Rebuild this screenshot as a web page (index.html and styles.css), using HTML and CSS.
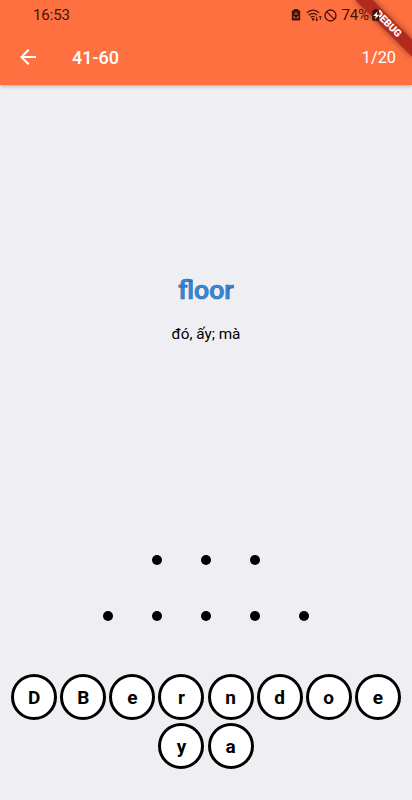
FILE: index.html
```html
<!DOCTYPE html>
<html lang="vi">
<head>
  <meta charset="UTF-8" />
  <title>41-60</title>
  <meta name="viewport" content="width=device-width, initial-scale=1.0" />
  <link rel="stylesheet" href="styles.css">
</head>
<body>
  <header>
    <div class="status-bar">
      <span class="time">16:53</span>
      <div class="status-icons">
        <svg class="saver" width="10" height="12" viewBox="0 0 10 12">
          <path d="M3 0h4v1.3h1.200q1 0 1 1v8.200q0 1-1 1H1.800q-1 0-1-1V2.300q0-1 1-1H3z" fill="#431307"/>
          <path d="M3.500 5.700L5 3.700 6.500 5.700M3 7.100v1.700h1.500M7 7.100v1.700H5.500" fill="none" stroke="#ff7040" stroke-width=".9"/>
        </svg>
        <svg class="wifi" width="17" height="13" viewBox="0 0 17 13">
          <g fill="none" stroke="#431307" stroke-width="1.200">
            <path d="M.7 3.900Q7 -1.700 13.300 3.900M2.700 6.300Q7 2.500 11.300 6.100M4.700 8.500Q7 6.700 8.600 8"/>
            <path d="M10.700 7.800v4M9.400 10.500l1.300 1.300 1.300-1.300M14.300 11V7M13 8.300L14.300 7l1.300 1.300" stroke-width="1"/>
          </g>
          <circle cx="7" cy="10.200" r="1.200" fill="#431307"/>
        </svg>
        <svg class="block" width="13" height="13" viewBox="0 0 13 13">
          <circle cx="6.500" cy="6.500" r="5.500" fill="none" stroke="#431307" stroke-width="1.300"/>
          <path d="M2.600 2.600l7.800 7.800" stroke="#431307" stroke-width="1.300"/>
        </svg>
        <span class="percent">74%</span>
        <svg class="battery" width="9" height="12" viewBox="0 0 9 12">
          <path d="M2 0h3.500v1.200H7v10.600H1.200Q.2 11.800.2 10.800V2.200q0-1 1-1H2z" fill="#431307"/>
          <path d="M5.400 2.600L1.200 7h2.600L3 10.200 7.400 5.800H4.700z" fill="#fff"/>
        </svg>
      </div>
    </div>
    <div class="app-bar">
      <svg class="back" width="24" height="24" viewBox="0 0 24 24">
        <path d="M20 11H7.830l5.590-5.590L12 4l-8 8 8 8 1.410-1.410L7.830 13H20v-2z" fill="#fff"/>
      </svg>
      <h1>41-60</h1>
      <span class="count">1/20</span>
    </div>
    <div class="debug">DEBUG</div>
  </header>

  <main>
    <section class="question">
      <h2>floor</h2>
      <p>đó, ấy; mà</p>
    </section>

    <section class="answer">
      <div class="dots"><i></i><i></i><i></i></div>
      <div class="dots"><i></i><i></i><i></i><i></i><i></i></div>
    </section>

    <section class="letters">
      <button>D</button>
      <button>B</button>
      <button>e</button>
      <button>r</button>
      <button>n</button>
      <button>d</button>
      <button>o</button>
      <button>e</button>
      <button>y</button>
      <button>a</button>
    </section>
  </main>
</body>
</html>
```
FILE: styles.css
```css
* {
  box-sizing: border-box;
  margin: 0;
  padding: 0;
}

body {
  display: flex;
  flex-direction: column;
  height: 800px;
  overflow: hidden;
  font-family: Roboto, sans-serif;
  background: #efeef3;
  color: #000;
}

header {
  position: relative;
  height: 85px;
  background: #ff7040;
  box-shadow: 0 1px 4px rgba(0, 0, 0, 0.3);
  z-index: 1;
}

.status-bar {
  position: relative;
  display: flex;
  align-items: center;
  justify-content: space-between;
  height: 29px;
  padding: 1px 31px 0 33px;
  font-size: 15px;
  color: #431307;
  z-index: 2;
}

.time {
  letter-spacing: -0.1px;
}

.status-icons {
  display: flex;
  align-items: center;
}

.wifi {
  margin-left: 5px;
}

.block {
  margin-left: 1px;
}

.percent {
  margin-left: 4px;
  letter-spacing: -0.1px;
}

.battery {
  margin-left: 3px;
}

.app-bar {
  display: flex;
  align-items: center;
  height: 56px;
  padding: 0 16px;
  color: #fff;
}

h1 {
  margin-left: 32px;
  font-size: 18px;
  font-weight: 500;
}

.count {
  margin-left: auto;
  font-size: 16.3px;
}

main {
  flex: 1;
  display: flex;
  flex-direction: column;
}

.question {
  height: 470.4px;
  padding-top: 189px;
  text-align: center;
}

h2 {
  font-size: 26.7px;
  line-height: 32px;
  font-weight: 500;
  color: #3b8ad8;
  -webkit-text-stroke: 0.7px #2268b0;
}

.question p {
  margin-top: 18px;
  font-size: 15.3px;
  line-height: 20px;
}

.answer {
  height: 119px;
}

.dots {
  display: flex;
  justify-content: center;
  gap: 39px;
  height: 10px;
  margin-bottom: 46px;
}

.dots i {
  width: 10px;
  height: 10px;
  border-radius: 50%;
  background: #000;
}

.letters {
  display: flex;
  flex-wrap: wrap;
  justify-content: center;
  gap: 3.1px;
}

.letters button {
  width: 46px;
  height: 46px;
  border: 3px solid #000;
  border-radius: 50%;
  background: #fff;
  color: #000;
  font: 700 19px Roboto, sans-serif;
}

.debug {
  position: absolute;
  top: 18px;
  right: -16px;
  width: 80px;
  height: 12px;
  background: #b3281f;
  box-shadow: 0 0 6px rgba(0, 0, 0, 0.5);
  color: #fff;
  font-size: 10.2px;
  font-weight: 900;
  line-height: 12px;
  text-align: center;
  transform: rotate(45deg);
  z-index: 1;
}
```
